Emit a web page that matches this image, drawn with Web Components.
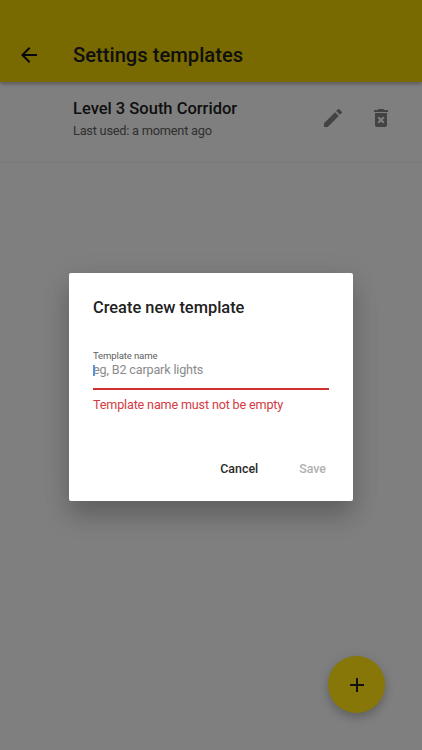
<!DOCTYPE html>
<html>
<head>
<meta charset="utf-8">
<title>Settings templates</title>
<style>
html,body{margin:0;padding:0;height:100%;}
body{font-family:Roboto,"Liberation Sans",sans-serif;background:#fff;overflow:hidden;}
</style>
</head>
<body>
<settings-screen>
    <app-bar title="Settings templates"></app-bar>
    <template-row name="Level 3 South Corridor" used="Last used: a moment ago"></template-row>
    <dialog-scrim>
        <template-dialog></template-dialog>
    </dialog-scrim>
    <add-fab></add-fab>
</settings-screen>

<script>
class SettingsScreen extends HTMLElement{
    constructor(){
        super();
        this.attachShadow({mode:"open"});
    }
    connectedCallback(){
        this.shadowRoot.innerHTML=`
        <style>
        :host{
            display:flex;
            flex-direction:column;
            position:relative;
            width:422px;
            height:750px;
            overflow:hidden;
            background:#fff;
        }
        </style>
        <slot></slot>
        `;
    }
}
customElements.define('settings-screen',SettingsScreen);

class AppBar extends HTMLElement{
    constructor(){
        super();
        this.attachShadow({mode:"open"});
    }
    connectedCallback(){
        this.shadowRoot.innerHTML=`
        <style>
        :host{
            display:flex;
            align-items:center;
            box-sizing:border-box;
            height:82px;
            padding:27px 0 0 17px;
            background:#f0d400;
            color:#212121;
            box-shadow:0 2px 4px rgba(0,0,0,.3);
            position:relative;
        }
        svg{width:24px;height:24px;display:block;fill:#111;}
        span{margin-left:32px;font-size:20.2px;font-weight:500;}
        </style>
        <svg viewBox="0 0 24 24"><path d="M20 11H7.830l5.590-5.590L12 4l-8 8 8 8 1.410-1.410L7.830 13H20v-2z"/></svg>
        <span>${this.getAttribute('title')}</span>
        `;
    }
}
customElements.define('app-bar',AppBar);

class TemplateRow extends HTMLElement{
    constructor(){
        super();
        this.attachShadow({mode:"open"});
    }
    connectedCallback(){
        this.shadowRoot.innerHTML=`
        <style>
        :host{
            display:flex;
            align-items:center;
            box-sizing:border-box;
            height:81px;
            padding:0 29px 8px 73px;
            border-bottom:1px solid #f2f2f2;
        }
        .text{flex:1;padding-top:2px;}
        h2{margin:0;font-size:16.500px;font-weight:500;color:#212121;line-height:22px;}
        p{margin:1px 0 0;font-size:12.800px;letter-spacing:-.24px;color:#616161;line-height:20px;}
        svg{width:24px;height:24px;display:block;fill:#868686;}
        .edit{margin-right:24px;}
        </style>
        <div class="text">
            <h2>${this.getAttribute('name')}</h2>
            <p>${this.getAttribute('used')}</p>
        </div>
        <svg class="edit" viewBox="0 0 24 24"><path d="M3 17.250V21h3.750L17.810 9.940l-3.750-3.750L3 17.250zM20.710 7.040a1 1 0 0 0 0-1.410l-2.340-2.340a1 1 0 0 0-1.410 0l-1.830 1.830 3.750 3.750 1.830-1.830z"/></svg>
        <svg viewBox="0 0 24 24"><path d="M6 19c0 1.100.9 2 2 2h8c1.100 0 2-.9 2-2V7H6v12zm2.460-7.120 1.410-1.410L12 12.590l2.120-2.120 1.410 1.410L13.410 14l2.120 2.120-1.410 1.410L12 15.410l-2.120 2.120-1.410-1.410L10.590 14l-2.130-2.120zM15.500 4l-1-1h-5l-1 1H5v2h14V4z"/></svg>
        `;
    }
}
customElements.define('template-row',TemplateRow);

class AddFab extends HTMLElement{
    constructor(){
        super();
        this.attachShadow({mode:"open"});
    }
    connectedCallback(){
        this.shadowRoot.innerHTML=`
        <style>
        :host{
            position:absolute;
            right:37px;
            bottom:37px;
            width:57px;
            height:57px;
            border-radius:50%;
            background:#877708;
            box-shadow:0 5px 9px rgba(0,0,0,.18),0 1px 14px rgba(0,0,0,.08);
            display:flex;
            align-items:center;
            justify-content:center;
        }
        svg{width:24px;height:24px;fill:#111;}
        </style>
        <svg viewBox="0 0 24 24"><path d="M19 13h-6v6h-2v-6H5v-2h6V5h2v6h6v2z"/></svg>
        `;
    }
}
customElements.define('add-fab',AddFab);

class DialogScrim extends HTMLElement{
    constructor(){
        super();
        this.attachShadow({mode:"open"});
    }
    connectedCallback(){
        this.shadowRoot.innerHTML=`
        <style>
        :host{
            position:absolute;
            inset:0;
            background:rgba(0,0,0,.5);
            display:flex;
            align-items:center;
            justify-content:center;
            padding-top:24px;
            box-sizing:border-box;
        }
        </style>
        <slot></slot>
        `;
    }
}
customElements.define('dialog-scrim',DialogScrim);

class TemplateDialog extends HTMLElement{
    constructor(){
        super();
        this.attachShadow({mode:"open"});
    }
    connectedCallback(){
        this.shadowRoot.innerHTML=`
        <style>
        :host{
            display:flex;
            flex-direction:column;
            box-sizing:border-box;
            width:284px;
            height:228px;
            padding:24px 24px 0;
            background:#fff;
            border-radius:2px;
            box-shadow:0 16px 24px rgba(0,0,0,.18),0 6px 30px rgba(0,0,0,.1);
        }
        h1{margin:0;font-size:16.400px;line-height:22px;font-weight:500;color:#212121;}
        label{display:block;margin-top:30px;font-size:9.600px;letter-spacing:-.15px;line-height:14px;color:#616161;}
        .input{
            position:relative;
            height:25px;
            line-height:14px;
            font-size:12.600px;
            letter-spacing:-.16px;
            color:#8a8a8a;
            border-bottom:2px solid #d32f2f;
        }
        .caret{position:absolute;left:0;top:2px;width:2px;height:11px;background:#5c8fd6;}
        .error{margin-top:7px;font-size:12.600px;letter-spacing:-.16px;line-height:16px;color:#d33a3f;}
        .actions{
            display:flex;
            justify-content:flex-end;
            gap:41px;
            margin-top:48px;
            padding-right:3px;
            font-size:12.400px;
            line-height:16px;
            font-weight:500;
            color:#2a2a2a;
        }
        .off{color:#b0b0b0;}
        </style>
        <h1>Create new template</h1>
        <label>Template name</label>
        <div class="input"><span class="caret"></span>eg, B2 carpark lights</div>
        <div class="error">Template name must not be empty</div>
        <div class="actions"><span>Cancel</span><span class="off">Save</span></div>
        `;
    }
}
customElements.define('template-dialog',TemplateDialog);
</script>
</body>
</html>
